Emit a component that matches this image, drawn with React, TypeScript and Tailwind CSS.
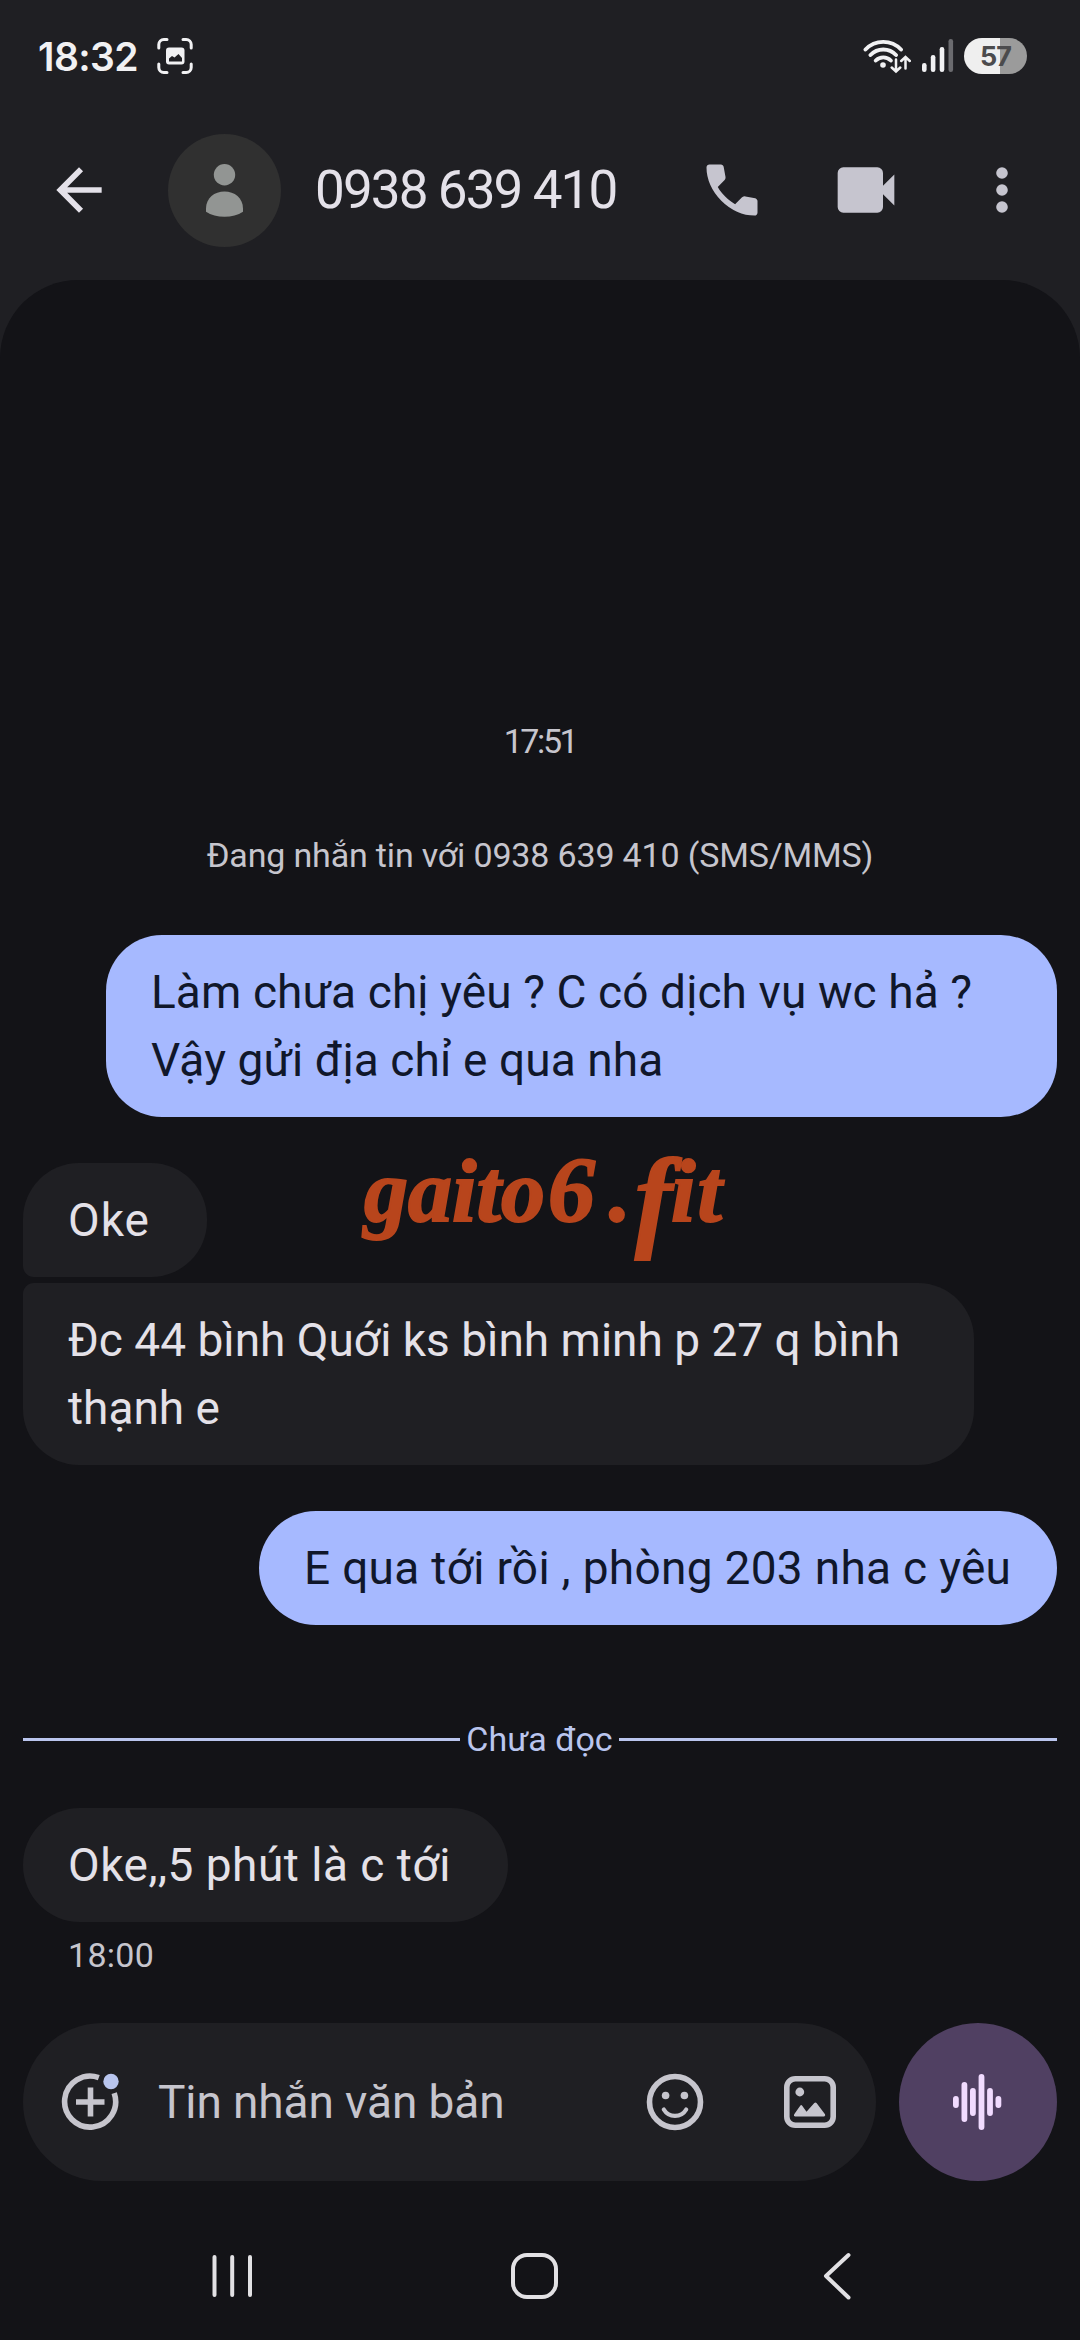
import React from "react";

interface BubbleProps {
  lines: string[];
  mine?: boolean;
  className?: string;
}

const Bubble: React.FC<BubbleProps> = ({ lines, mine, className = "" }) => {
  const tone = mine ? "bg-[#a6b9ff] text-[#10172a] self-end" : "bg-[#1f1f23] text-[#e4e1e8] self-start";
  return (
    <div className={`flex flex-col shrink-0 py-[23px] pl-[45px] whitespace-nowrap text-[46px] leading-[68px] ${tone} ${className}`}>
      {lines.map((line) => (
        <span key={line}>{line}</span>
      ))}
    </div>
  );
};

const StatusBar = () => (
  <div className="flex items-center h-[112px] pl-[38px] pr-[53px] text-[#f1f1f3]">
    <span className="w-[119px] font-[Inter] font-semibold text-[39px] leading-none tracking-[-0.6px]">18:32</span>
    <svg className="w-[36px] h-[36px]" viewBox="0 0 36 36" fill="none">
      <path
        d="M1.8 10V6.5a5 5 0 0 1 5-5H10M26 1.5h3.2a5 5 0 0 1 5 5V10M34.2 26v3.5a5 5 0 0 1-5 5H26M10 34.5H6.8a5 5 0 0 1-5-5V26"
        stroke="currentColor" strokeWidth="3" strokeLinecap="round"
      />
      <rect x="9" y="9.5" width="18.5" height="17" rx="3" fill="currentColor" />
      <path d="M12 23.5v-3l3-2.500 2.500 1.500 4-3.500 3.500 4v3.500z" fill="#1f1f23" />
    </svg>
    <svg className="w-[48px] h-[36px] ml-auto" viewBox="0 0 48 36" fill="none" stroke="currentColor" strokeLinecap="round">
      <path d="M2.5 11.5a24.5 24.5 0 0 1 35.5 0M7.5 17a17.5 17.5 0 0 1 25.5 0M12.8 22.5a10.5 10.5 0 0 1 15 0" strokeWidth="3.9" />
      <circle cx="20" cy="27" r="2.8" fill="currentColor" stroke="none" />
      <path d="M33 21.5v11.5M28.7 29.5l4.3 4 4.3-4M42.5 30.5V19.5M38.2 23l4.3-4 4.3 4" strokeWidth="2.5" />
    </svg>
    <svg className="w-[34px] h-[36px] ml-[10px]" viewBox="0 0 34 36" fill="currentColor">
      <rect x="1" y="25" width="4.6" height="9" rx="2.2" />
      <rect x="9.8" y="17" width="4.6" height="17" rx="2.2" />
      <rect x="18.7" y="9" width="4.6" height="25" rx="2.2" />
      <rect x="27.5" y="1" width="4.6" height="33" rx="2.2" fill="#6b6b6f" />
    </svg>
    <div className="flex items-center justify-center w-[63px] h-[36px] ml-[9px] rounded-full bg-linear-to-r from-[#efefef] from-[57%] to-[#9b9b9b] to-[57%]">
      <span className="font-[Inter] font-bold text-[27px] leading-none tracking-[-1px] text-[#4b4b4d]">57</span>
    </div>
  </div>
);

const TopBar = () => (
  <div className="flex items-center h-[156px] pl-[45px] pr-[44px] text-[#c6c5cf]">
    <svg className="w-[68px] h-[68px]" viewBox="0 0 24 24" fill="#e4e1e9">
      <path d="M7.83 13l5.6 5.6L12 20l-8-8 8-8 1.430 1.400L7.830 11H20v2z" />
    </svg>
    <svg className="w-[113px] h-[113px] ml-[55px]" viewBox="0 0 113 113">
      <circle cx="56.5" cy="56.5" r="56.5" fill="#303030" />
      <circle cx="56.5" cy="40.7" r="10.7" fill="#929593" />
      <path d="M38 74.500c0-10.500 8.500-17 18.500-17s18.500 6.500 18.500 17v3.200c-5 3.200-11.500 5-18.500 5s-13.500-1.800-18.500-5z" fill="#929593" />
    </svg>
    <span className="ml-[34px] text-[53px] leading-none tracking-[-1.9px] whitespace-nowrap text-[#e4e1e9]">0938 639 410</span>
    <svg className="w-[68px] h-[68px] ml-auto" viewBox="0 0 24 24" fill="currentColor">
      <path d="M19.950 21q-3.125 0-6.175-1.363t-5.550-3.862-3.862-5.550T3 4.050q0-.45.3-.75t.75-.3H8.100q.35 0 .625.238t.325.562l.650 3.500q.050.4-.025.675T9.400 8.450L6.975 10.900q.5.925 1.188 1.788t1.512 1.662q.775.775 1.625 1.438t1.800 1.212l2.350-2.350q.225-.225.588-.337t.712-.063l3.450.7q.35.1.575.363T21 15.900v4.050q0 .45-.3.750t-.75.300" />
    </svg>
    <svg className="w-[68px] h-[68px] ml-[66px]" viewBox="0 0 24 24" fill="currentColor">
      <path d="M4 20q-.825 0-1.413-.587T2 18V6q0-.825.587-1.413T4 4h12q.825 0 1.413.587T18 6v4.500l4-4v11l-4-4V18q0 .825-.587 1.413T16 20z" />
    </svg>
    <svg className="w-[68px] h-[68px] ml-[68px]" viewBox="0 0 24 24" fill="currentColor">
      <circle cx="12" cy="6" r="2.05" />
      <circle cx="12" cy="12" r="2.05" />
      <circle cx="12" cy="18" r="2.05" />
    </svg>
  </div>
);

const Watermark = () => (
  <div className="absolute left-[364px] top-[1127px] flex items-baseline font-['Liberation_Serif',serif] font-bold italic leading-none text-[#b8451c] [-webkit-text-stroke:2px_#b8451c]">
    <span className="w-[184px] text-[88px]">gaito</span>
    <span className="w-[61px] text-[94px]">6</span>
    <span className="w-[26px] text-[88px]">.</span>
    <span className="relative top-[15px] w-[36px] text-[112px]">f</span>
    <span className="text-[88px] tracking-[2px]">it</span>
  </div>
);

const Composer = () => (
  <div className="flex shrink-0 justify-between h-[158px] mt-[45px] text-[#c6c5cd]">
    <div className="flex items-center w-[853px] rounded-full bg-[#1f1f23] pl-[38px] pr-[40px]">
      <svg className="w-[60px] h-[60px]" viewBox="0 0 60 60" fill="none" stroke="currentColor" strokeWidth="5.6">
        <path d="M37.800 5.600A25.500 25.500 0 1 0 53.200 21.200" />
        <path d="M29.500 15.500v29M15 30h28.500" />
        <circle cx="50" cy="9.5" r="7.7" fill="#b8c5ee" stroke="none" />
      </svg>
      <span className="ml-[37px] text-[46px] leading-none whitespace-nowrap tracking-[-0.1px]">Tin nhắn văn bản</span>
      <svg className="w-[60px] h-[60px] ml-auto" viewBox="0 0 60 60" fill="none" stroke="currentColor">
        <circle cx="30" cy="30" r="25.5" strokeWidth="5.6" />
        <circle cx="20.6" cy="23.5" r="3.8" fill="currentColor" stroke="none" />
        <circle cx="39.4" cy="23.5" r="3.8" fill="currentColor" stroke="none" />
        <path d="M18.800 37.500a13 13 0 0 0 22.400 0" strokeWidth="4.2" strokeLinecap="round" />
      </svg>
      <svg className="w-[52px] h-[52px] ml-[79px]" viewBox="0 0 52 52" fill="currentColor">
        <rect x="2.8" y="2.8" width="46.4" height="46.4" rx="8.5" fill="none" stroke="currentColor" strokeWidth="5.6" />
        <circle cx="15.8" cy="16" r="4.4" />
        <path d="M11 40.500q-1.800-.5-.8-2.200l6-8.600q1-1.200 2 0l4.300 6 7.800-8.600q1.200-1.200 2.200 0l8.500 11.200q.8 1.600-.8 2.200z" />
      </svg>
    </div>
    <div className="flex items-center justify-center w-[158px] rounded-full bg-[#504062]">
      <svg className="w-[50px] h-[58px] -ml-[3px]" viewBox="0 0 50 58" fill="#f1dbff">
        <rect x="1" y="23" width="5.8" height="12" rx="2.9" />
        <rect x="9.5" y="9" width="5.8" height="40" rx="2.9" />
        <rect x="18" y="15" width="5.8" height="28" rx="2.9" />
        <rect x="26.6" y="1" width="5.8" height="56" rx="2.9" />
        <rect x="35.1" y="15" width="5.8" height="28" rx="2.9" />
        <rect x="43.5" y="23" width="5.8" height="12" rx="2.9" />
      </svg>
    </div>
  </div>
);

const NavBar = () => (
  <div className="flex shrink-0 items-center h-[100px] mt-[45px] pl-[189px] pr-[205px] text-[#e2e1e4]">
    <svg className="w-[40px] h-[46px]" viewBox="0 0 40 46" fill="none" stroke="currentColor" strokeWidth="4" strokeLinecap="round">
      <path d="M2.500 4v38M20.200 4v38M38 4v38" />
    </svg>
    <div className="w-[47px] h-[46px] ml-[259px] rounded-[16px] border-[4.5px] border-current" />
    <svg className="w-[30px] h-[48px] ml-auto" viewBox="0 0 30 48" fill="none" stroke="currentColor" strokeWidth="4" strokeLinecap="round" strokeLinejoin="round">
      <path d="M26.500 3L4 24l22.500 21.500" />
    </svg>
  </div>
);

const App: React.FC = () => {
  return (
    <div className="relative flex flex-col w-[1080px] h-[2340px] overflow-hidden bg-[#1f1f23] font-[Roboto,sans-serif]">
      <StatusBar />
      <TopBar />
      <main className="flex flex-col flex-1 mt-[12px] px-[23px] rounded-t-[78px] bg-[#131317]">
        <div className="mt-[438px] self-center text-[34px] leading-[46px] tracking-[-2.4px] text-[#c6c5cd]">17:51</div>
        <div className="mt-[68px] self-center text-[34px] leading-[46px] tracking-[-0.17px] whitespace-nowrap text-[#c6c5cd]">
          Đang nhắn tin với 0938 639 410 (SMS/MMS)
        </div>
        <Bubble
          mine
          className="mt-[57px] w-[951px] rounded-[56px] tracking-[0.1px]"
          lines={["Làm chưa chị yêu ? C có dịch vụ wc hả ?", "Vậy gửi địa chỉ e qua nha"]}
        />
        <Bubble className="mt-[46px] w-[184px] rounded-[56px] rounded-bl-[11px] tracking-[1px]" lines={["Oke"]} />
        <Bubble
          className="mt-[6px] w-[951px] rounded-[56px] rounded-tl-[11px]"
          lines={["Đc 44 bình Quới ks bình minh p 27 q bình", "thạnh e"]}
        />
        <Bubble
          mine
          className="mt-[46px] w-[798px] rounded-[57px] tracking-[0.3px]"
          lines={["E qua tới rồi , phòng 203 nha c yêu"]}
        />
        <div className="flex shrink-0 items-center mt-[91px] h-[46px] text-[#bac5ee]">
          <div className="w-[437px] h-[3px] bg-current" />
          <span className="flex-1 text-center text-[34px] leading-none whitespace-nowrap">Chưa đọc</span>
          <div className="w-[438px] h-[3px] bg-current" />
        </div>
        <Bubble className="mt-[46px] w-[485px] rounded-[57px] tracking-[0.5px]" lines={["Oke,,5 phút là c tới"]} />
        <div className="mt-[10px] ml-[45px] text-[34px] leading-[46px] tracking-[0.3px] text-[#c6c5cd]">18:00</div>
        <Composer />
        <NavBar />
      </main>
      <Watermark />
    </div>
  );
};

export default App;
